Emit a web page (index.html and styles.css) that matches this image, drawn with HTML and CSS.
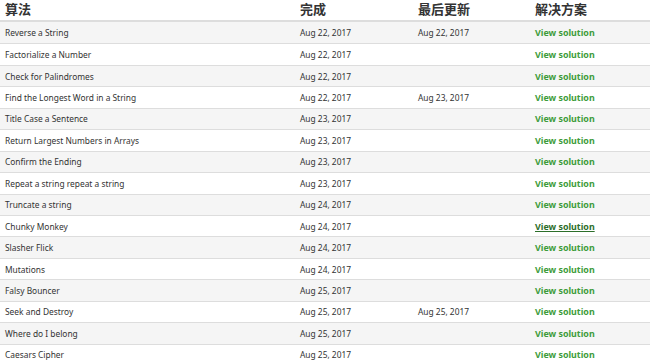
FILE: index.html
```html
<!DOCTYPE html>
<html lang="zh">
<head>
<meta charset="utf-8">
<link rel="stylesheet" href="styles.css">
</head>
<body>
<table class="algo-table">
  <colgroup>
    <col class="c-name"><col class="c-done"><col class="c-upd"><col class="c-sol">
  </colgroup>
  <thead>
    <tr><th>算法</th><th>完成</th><th>最后更新</th><th>解决方案</th></tr>
  </thead>
  <tbody>
    <tr><td>Reverse a String</td><td>Aug 22, 2017</td><td>Aug 22, 2017</td><td><a class="sol">View solution</a></td></tr>
    <tr><td>Factorialize a Number</td><td>Aug 22, 2017</td><td></td><td><a class="sol">View solution</a></td></tr>
    <tr><td>Check for Palindromes</td><td>Aug 22, 2017</td><td></td><td><a class="sol">View solution</a></td></tr>
    <tr><td>Find the Longest Word in a String</td><td>Aug 22, 2017</td><td>Aug 23, 2017</td><td><a class="sol">View solution</a></td></tr>
    <tr><td>Title Case a Sentence</td><td>Aug 23, 2017</td><td></td><td><a class="sol">View solution</a></td></tr>
    <tr><td>Return Largest Numbers in Arrays</td><td>Aug 23, 2017</td><td></td><td><a class="sol">View solution</a></td></tr>
    <tr><td>Confirm the Ending</td><td>Aug 23, 2017</td><td></td><td><a class="sol">View solution</a></td></tr>
    <tr><td>Repeat a string repeat a string</td><td>Aug 23, 2017</td><td></td><td><a class="sol">View solution</a></td></tr>
    <tr><td>Truncate a string</td><td>Aug 24, 2017</td><td></td><td><a class="sol">View solution</a></td></tr>
    <tr><td>Chunky Monkey</td><td>Aug 24, 2017</td><td></td><td><a class="sol hover">View solution</a></td></tr>
    <tr><td>Slasher Flick</td><td>Aug 24, 2017</td><td></td><td><a class="sol">View solution</a></td></tr>
    <tr><td>Mutations</td><td>Aug 24, 2017</td><td></td><td><a class="sol">View solution</a></td></tr>
    <tr><td>Falsy Bouncer</td><td>Aug 25, 2017</td><td></td><td><a class="sol">View solution</a></td></tr>
    <tr><td>Seek and Destroy</td><td>Aug 25, 2017</td><td>Aug 25, 2017</td><td><a class="sol">View solution</a></td></tr>
    <tr><td>Where do I belong</td><td>Aug 25, 2017</td><td></td><td><a class="sol">View solution</a></td></tr>
    <tr><td>Caesars Cipher</td><td>Aug 25, 2017</td><td></td><td><a class="sol">View solution</a></td></tr>
  </tbody>
</table>
</body>
</html>
```

FILE: styles.css
```css
html, body {
  margin: 0;
  padding: 0;
  background: #fff;
}
body {
  font-family: "Noto Sans", "Open Sans", "Noto Sans CJK SC", sans-serif;
  color: #333;
}
.algo-table {
  width: 100%;
  border-collapse: collapse;
  table-layout: fixed;
}
.c-name { width: 295px; }
.c-done { width: 118px; }
.c-upd { width: 117px; }
.algo-table th {
  text-align: left;
  font-family: "Noto Sans CJK SC", sans-serif;
  font-size: 13px;
  font-weight: 700;
  color: #333;
  height: 20px;
  padding: 0 0 0 5px;
  line-height: 18px;
  vertical-align: top;
  border-bottom: 2px solid #ddd;
}
.algo-table td {
  font-size: 8.4px;
  height: 20.45px;
  padding: 0 0 0 5px;
  border-top: 1px solid #ddd;
  white-space: nowrap;
  vertical-align: middle;
}
.algo-table tbody tr:first-child td { border-top: 0; height: 21.45px; }
.algo-table tbody tr:nth-child(odd) { background: #f5f5f5; }
.sol {
  font-size: 8.9px;
  color: #3d9c3a;
  font-weight: 700;
  text-decoration: none;
}
.sol.hover {
  color: #2c6e2a;
  text-decoration: underline;
}
```
